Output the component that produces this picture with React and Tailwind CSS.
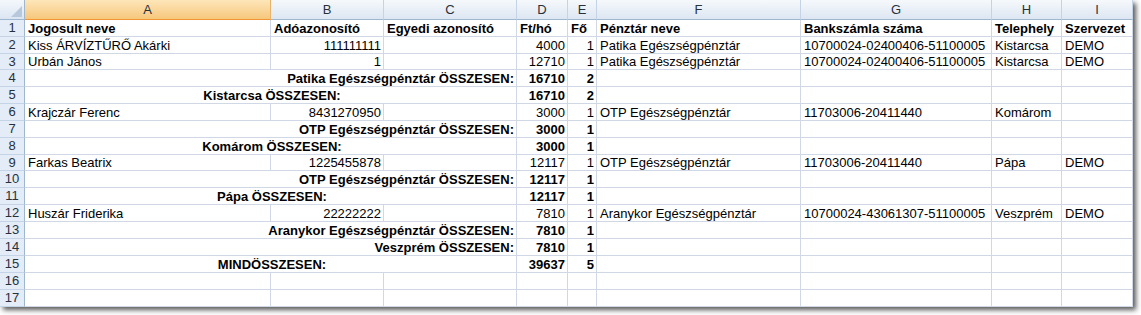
import React from "react"

const cols = ["A", "B", "C", "D", "E", "F", "G", "H", "I"]

// b = bold, span = merged A:C with alignment
const rows = [
    { cells: ["Jogosult neve", "Adóazonosító", "Egyedi azonosító", "Ft/hó", "Fő", "Pénztár neve", "Bankszámla száma", "Telephely", "Szervezet"], head: true },
    { cells: ["Kiss ÁRVÍZTŰRŐ Akárki", "111111111", "", "4000", "1", "Patika Egészségpénztár", "10700024-02400406-51100005", "Kistarcsa", "DEMO"] },
    { cells: ["Urbán János", "1", "", "12710", "1", "Patika Egészségpénztár", "10700024-02400406-51100005", "Kistarcsa", "DEMO"], short: true },
    { sum: "Patika Egészségpénztár ÖSSZESEN:", align: "right", d: "16710", e: "2" },
    { sum: "Kistarcsa ÖSSZESEN:", align: "center", d: "16710", e: "2" },
    { cells: ["Krajczár Ferenc", "8431270950", "", "3000", "1", "OTP Egészségpénztár", "11703006-20411440", "Komárom", ""] },
    { sum: "OTP Egészségpénztár ÖSSZESEN:", align: "right", d: "3000", e: "1" },
    { sum: "Komárom ÖSSZESEN:", align: "center", d: "3000", e: "1" },
    { cells: ["Farkas Beatrix", "1225455878", "", "12117", "1", "OTP Egészségpénztár", "11703006-20411440", "Pápa", "DEMO"], short: true },
    { sum: "OTP Egészségpénztár ÖSSZESEN:", align: "right", d: "12117", e: "1" },
    { sum: "Pápa ÖSSZESEN:", align: "center", d: "12117", e: "1" },
    { cells: ["Huszár Friderika", "22222222", "", "7810", "1", "Aranykor Egészségpénztár", "10700024-43061307-51100005", "Veszprém", "DEMO"] },
    { sum: "Aranykor Egészségpénztár ÖSSZESEN:", align: "right", d: "7810", e: "1" },
    { sum: "Veszprém ÖSSZESEN:", align: "right", d: "7810", e: "1" },
    { sum: "MINDÖSSZESEN:", align: "center", d: "39637", e: "5" },
    { cells: ["", "", "", "", "", "", "", "", ""] },
    { cells: ["", "", "", "", "", "", "", "", ""] },
]

const numeric = [1, 3, 4]

function Cell({ children, right, bold, className = "" }) {
    return (
        <div className={`flex items-end overflow-hidden whitespace-nowrap border-r border-b border-[#d0d7e5] leading-[15px] ${right ? "justify-end pr-[2px]" : "pl-[3px]"} ${bold ? "font-bold" : ""} ${className}`}>
            {children}
        </div>
    )
}

function RowHead({ n, short }) {
    return (
        <div className={`flex items-center justify-center border-r border-b border-r-[#9eb6ce] border-b-[#c5d3e6] bg-[#e4ecf7] text-[#27313c] ${short ? "h-[16px]" : "h-[17px]"}`}>
            {n}
        </div>
    )
}

export default function App() {
    return (
        <div className="bg-white w-[1141px] h-[315px] font-['Liberation_Sans',Arial,sans-serif] text-[13px] text-black">
            <div className="w-[1133px] bg-white shadow-[3px_3px_5px_rgba(0,0,0,0.65)] grid grid-cols-[25px_246px_113px_133px_51px_29px_204px_191px_70px_71px]">
                {/* header row */}
                <div className="relative h-[20px] border-r border-b border-[#9eb6ce] bg-gradient-to-b from-[#f4f8fc] to-[#dbe5f2]">
                    <svg className="absolute right-[2px] bottom-[2px]" width="11" height="11" viewBox="0 0 11 11">
                        <polygon points="11,0 11,11 0,11" fill="#b7c8dc" />
                    </svg>
                </div>
                {cols.map((c, i) => (
                    <div key={c} className={`flex items-center justify-center h-[20px] border-r border-b text-[#27313c] ${i === 0 ? "bg-gradient-to-b from-[#fde6b9] to-[#f6c77c] border-r-[#e7b36a] border-b-[#f29536]" : "bg-gradient-to-b from-[#f6f9fc] to-[#dde6f2] border-r-[#c5d3e6] border-b-[#9eb6ce]"}`}>
                        {c}
                    </div>
                ))}

                {rows.map((r, ri) => {
                    const h = r.short ? "h-[16px]" : "h-[17px]"
                    if (r.sum) {
                        return (
                            <React.Fragment key={ri}>
                                <RowHead n={ri + 1} short={r.short} />
                                <Cell bold className={`col-span-3 ${h} ${r.align === "right" ? "justify-end pr-[2px]" : "justify-center"}`}>{r.sum}</Cell>
                                <Cell bold right className={h}>{r.d}</Cell>
                                <Cell bold right className={h}>{r.e}</Cell>
                                <Cell className={h} />
                                <Cell className={h} />
                                <Cell className={h} />
                                <Cell className={h} />
                            </React.Fragment>
                        )
                    }
                    return (
                        <React.Fragment key={ri}>
                            <RowHead n={ri + 1} short={r.short} />
                            {r.cells.map((t, ci) => (
                                <Cell key={ci} bold={r.head} right={!r.head && numeric.includes(ci)} className={h}>{t}</Cell>
                            ))}
                        </React.Fragment>
                    )
                })}
            </div>
        </div>
    )
}
